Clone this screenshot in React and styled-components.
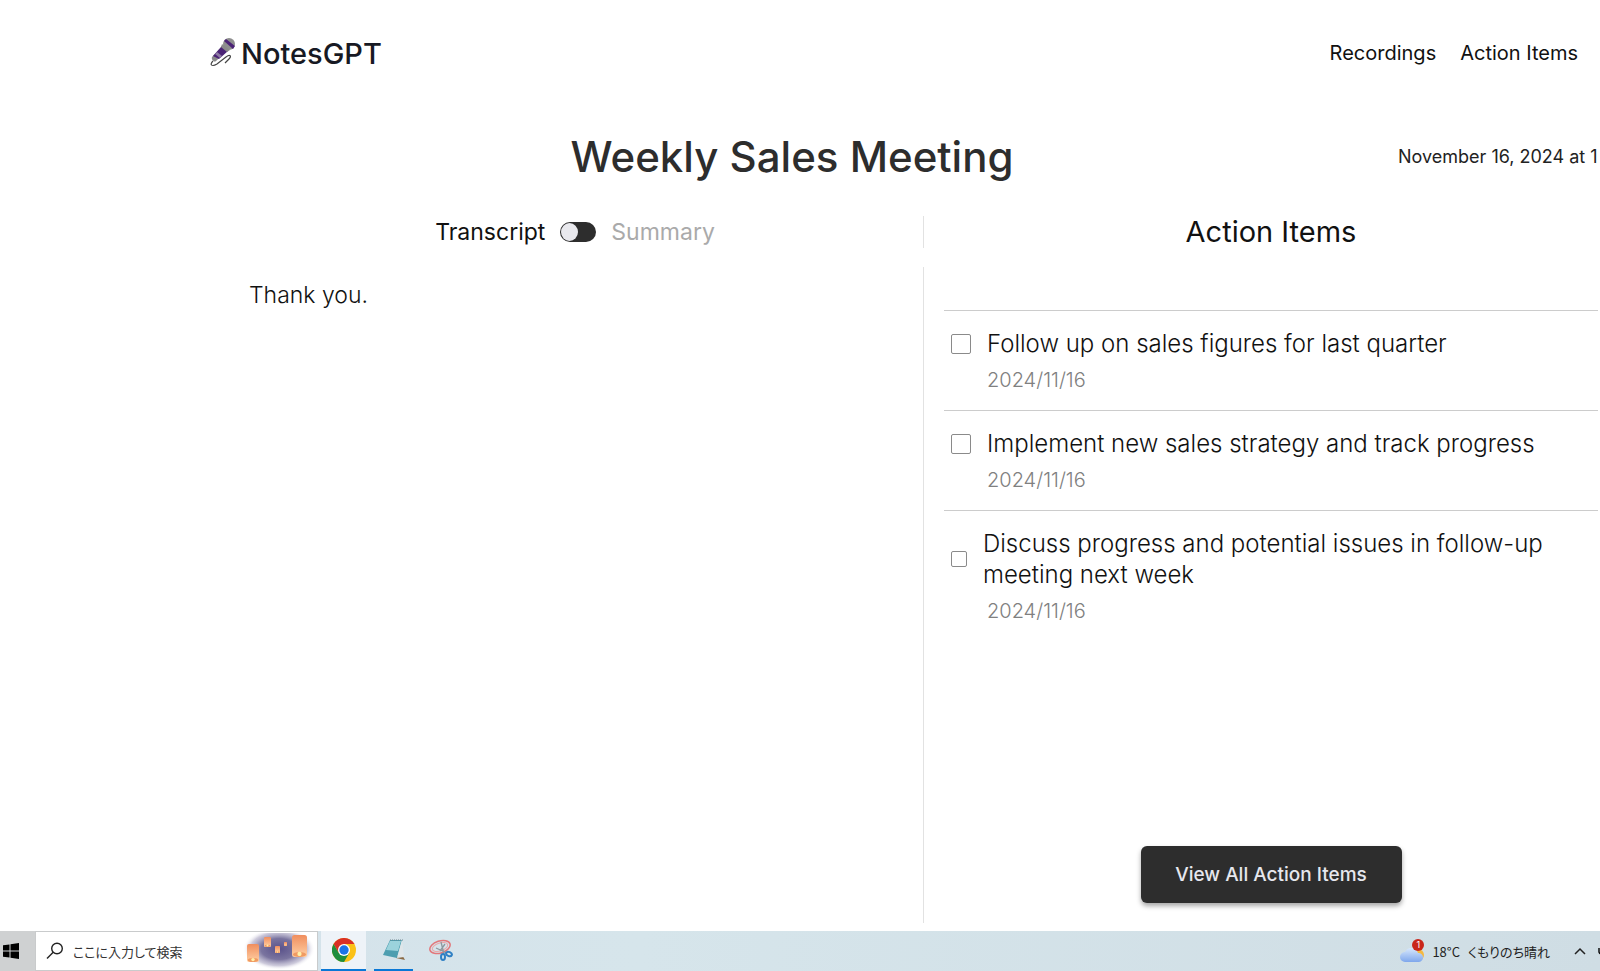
import React, { useState } from 'react';
import styled, { createGlobalStyle } from 'styled-components';

const items = [
  { id: 1, text: 'Follow up on sales figures for last quarter', date: '2024/11/16' },
  { id: 2, text: 'Implement new sales strategy and track progress', date: '2024/11/16' },
  { id: 3, text: 'Discuss progress and potential issues in follow-up meeting next week', date: '2024/11/16', wraps: true },
];

const MicLogo = () => (
  <svg width="26" height="30" viewBox="0 0 26 30" aria-hidden="true">
    <path d="M3 23C-1 27 2 29 7 26L16 19c4-3 6-1 3 2l-4 4" fill="none" stroke="#444" strokeWidth="1.2" />
    <path d="M2 19 13 7l5 5L6 23c-2 2-5-2-4-4z" fill="#8a8a8a" />
    <path d="m3 18 9-10 6 5-9 8z" fill="#4b2376" />
    <path d="m5 16 2-2 5 4-2 2z" fill="#8d7aa3" />
    <circle cx="19" cy="6" r="6" fill="#8e8e8e" />
    <path d="m14 3 2-2 9 7-2 3z" fill="#4b2376" />
    <path d="m12 6 8 6-3 2-6-5z" fill="#8a8a8a" />
  </svg>
);

const WindowsIcon = () => (
  <svg width="16" height="16" viewBox="0 0 16 16" aria-hidden="true">
    <path d="M0 2.3 6.5 1.4v6.1H0zM7.5 1.2 16 0v7.5H7.5zM0 8.5h6.5v6.1L0 13.7zM7.5 8.5H16V16l-8.5-1.2z" />
  </svg>
);

const SearchIcon = () => (
  <svg width="18" height="18" viewBox="0 0 18 18" fill="none" stroke="#222" strokeWidth="1.4" aria-hidden="true">
    <circle cx="11" cy="6.5" r="5.3" />
    <path d="M7.2 10.3 1 16.5" />
  </svg>
);

const Lantern = ({ x, y, w, h }) => (
  <g>
    <rect x={x} y={y} width={w} height={h} rx={w / 6} fill="url(#lantern)" />
    <ellipse cx={x + w / 2} cy={y + h - w / 6} rx={w / 2.3} ry={w / 6} fill="#f09a62" />
    <ellipse cx={x + w / 2} cy={y + h - w / 5} rx={w / 7} ry={w / 7} fill="#fff0a8" />
  </g>
);

const Lanterns = () => (
  <svg width="72" height="37" viewBox="0 0 72 37" aria-hidden="true">
    <defs>
      <radialGradient id="night">
        <stop offset="0" stopColor="#59518a" />
        <stop offset="0.5" stopColor="#7a749f" />
        <stop offset="0.8" stopColor="#b9b5cd" stopOpacity="0.7" />
        <stop offset="1" stopColor="#fff" stopOpacity="0" />
      </radialGradient>
      <linearGradient id="lantern" x1="0" y1="0" x2="0" y2="1">
        <stop offset="0" stopColor="#f08e5e" />
        <stop offset="1" stopColor="#ffd0a4" />
      </linearGradient>
    </defs>
    <ellipse cx="35" cy="16" rx="36" ry="21" fill="url(#night)" />
    <Lantern x={3} y={11} w={12} h={18} />
    <Lantern x={20} y={4} w={7} h={10} />
    <Lantern x={31} y={13} w={5} h={7} />
    <Lantern x={40} y={9} w={3} h={4} />
    <Lantern x={48} y={2} w={15} h={22} />
  </svg>
);

const ChromeIcon = () => (
  <svg width="24" height="24" viewBox="0 0 24 24" aria-hidden="true">
    <circle cx="12" cy="12" r="12" fill="#fbc116" />
    <path d="M1.6 6a12 12 0 0 1 20.8 0H12L6.8 15z" fill="#d93025" />
    <path d="M1.6 6A12 12 0 0 0 12 24l5.2-9H6.8z" fill="#1e8e3e" />
    <circle cx="12" cy="12" r="6" fill="#fff" />
    <circle cx="12" cy="12" r="4.7" fill="#1a73e8" />
  </svg>
);

const NotepadIcon = () => (
  <svg width="24" height="22" viewBox="0 0 24 22" aria-hidden="true">
    <path d="m19 14 4 7-9-2z" fill="#8a6a45" />
    <path d="M8 1h12l-5 18-14-3z" fill="#4d9eb0" />
    <path d="M8 2h11l-3 10-12-1z" fill="#9bd3dc" />
    <path d="m20 1 2 17-7 1z" fill="#dfe6e9" />
    <path d="M8 1h13" stroke="#70868e" strokeDasharray="1 1" />
  </svg>
);

const SnipIcon = () => (
  <svg width="24" height="22" viewBox="0 0 24 22" fill="none" aria-hidden="true">
    <ellipse cx="11" cy="8" rx="10.5" ry="6" stroke="#e2777b" strokeWidth="1.5" transform="rotate(-18 11 8)" />
    <ellipse cx="11" cy="8" rx="8" ry="4" stroke="#eaa8a9" transform="rotate(-18 11 8)" />
    <path d="m12 3 3 12M7 9l11 5M16 5l-5 7" stroke="#8d989e" strokeWidth="1.3" />
    <ellipse cx="14" cy="18" rx="2" ry="3" stroke="#2f80c4" strokeWidth="2" />
    <ellipse cx="20" cy="15" rx="3" ry="2" stroke="#2f80c4" strokeWidth="2" transform="rotate(25 20 15)" />
  </svg>
);

const CloudIcon = () => (
  <svg width="24" height="23" viewBox="0 0 24 23" aria-hidden="true">
    <defs>
      <linearGradient id="cloud" x1="0" y1="0" x2="0" y2="1">
        <stop offset="0" stopColor="#d8e8fc" />
        <stop offset="1" stopColor="#7fa7ec" />
      </linearGradient>
    </defs>
    <circle cx="18" cy="15" r="6" fill="#f5b93f" />
    <path d="M5 22a5 5 0 0 1 0-10 7 7 0 0 1 13 1 4.5 4.5 0 0 1 1 9z" fill="url(#cloud)" />
  </svg>
);

const ChevronIcon = () => (
  <svg width="12" height="8" viewBox="0 0 12 8" fill="none" stroke="#222" strokeWidth="1.5" aria-hidden="true">
    <path d="m1 7 5-5 5 5" />
  </svg>
);

// only the left edge of this tray icon is on screen
const EdgeIcon = () => (
  <svg width="2" height="8" viewBox="0 0 2 8" fill="none" stroke="#111" strokeWidth="1.5" aria-hidden="true">
    <path d="M1 1v4l1 2" />
  </svg>
);

const App = () => {
  const [showSummary, setShowSummary] = useState(false);
  const [done, setDone] = useState([]);

  const toggleDone = id =>
    setDone(done.includes(id) ? done.filter(d => d !== id) : [...done, id]);

  return (
    <Screen>
      <GlobalStyle />
      <Header>
        <Brand href="#">
          <MicLogo />
          NotesGPT
        </Brand>
        <Nav>
          <NavLink href="#recordings">Recordings</NavLink>
          <NavLink href="#actions">Action Items</NavLink>
        </Nav>
      </Header>
      <TitleRow>
        <Title>Weekly Sales Meeting</Title>
        <RecordedAt>November 16, 2024 at 1</RecordedAt>
      </TitleRow>
      <Columns>
        <Column>
          <Toolbar>
            <Mode $active={!showSummary}>Transcript</Mode>
            <Toggle
              type="button"
              role="switch"
              aria-checked={showSummary}
              aria-label="Show summary"
              onClick={() => setShowSummary(!showSummary)}
            >
              <Knob $on={showSummary} />
            </Toggle>
            <Mode $active={showSummary}>Summary</Mode>
          </Toolbar>
          <Transcript>Thank you.</Transcript>
        </Column>
        <Column>
          <Heading>Action Items</Heading>
          <Actions>
            <List>
              {items.map(item => (
                <Item key={item.id}>
                  <ItemLabel>
                    <Checkbox
                      type="checkbox"
                      $small={item.wraps}
                      checked={done.includes(item.id)}
                      onChange={() => toggleDone(item.id)}
                    />
                    <span>{item.text}</span>
                  </ItemLabel>
                  <ItemDate>{item.date}</ItemDate>
                </Item>
              ))}
            </List>
            <ViewAll type="button">View All Action Items</ViewAll>
          </Actions>
        </Column>
      </Columns>
      <Taskbar>
        <Start type="button" aria-label="Start">
          <WindowsIcon />
        </Start>
        <Search>
          <SearchIcon />
          <SearchInput type="text" aria-label="検索" placeholder="ここに入力して検索" />
          <Lanterns />
        </Search>
        <Task type="button" aria-label="Chrome" $running $focused>
          <ChromeIcon />
        </Task>
        <Task type="button" aria-label="Notepad" $running>
          <NotepadIcon />
        </Task>
        <Task type="button" aria-label="Snipping Tool">
          <SnipIcon />
        </Task>
        <Tray>
          <Weather>
            <CloudIcon />
            <Badge>1</Badge>
          </Weather>
          <span>18°C</span>
          <Forecast>くもりのち晴れ</Forecast>
          <ChevronIcon />
          <EdgeIcon />
        </Tray>
      </Taskbar>
    </Screen>
  );
};

export default App;

const GlobalStyle = createGlobalStyle`
  * {
    box-sizing: border-box;
  }

  body {
    margin: 0;
    background: #fff;
    color: #111;
    font-family: Inter, 'Noto Sans CJK JP', sans-serif;
  }

  button, input {
    font-family: inherit;
  }
`;

const Screen = styled.div`
  display: flex;
  flex-direction: column;
  min-height: 100vh;
  overflow: hidden;
`;

const Header = styled.header`
  display: flex;
  align-items: center;
  justify-content: space-between;
  height: 106px;
  padding: 0 22px 0 210px;
`;

const Brand = styled.a`
  display: flex;
  align-items: center;
  gap: 5px;
  color: #171923;
  font-size: 29px;
  font-weight: 500;
  text-decoration: none;
`;

const Nav = styled.nav`
  display: flex;
  gap: 24px;
`;

const NavLink = styled.a`
  color: #111;
  font-size: 20px;
  text-decoration: none;
`;

const TitleRow = styled.div`
  display: grid;
  grid-template-columns: 1fr auto 1fr;
  align-items: center;
  height: 100px;
  margin-right: 16px;
`;

const Title = styled.h1`
  grid-column: 2;
  margin: 0;
  color: #2d2d2d;
  font-size: 42px;
  font-weight: 500;
`;

const RecordedAt = styled.div`
  justify-self: end;
  width: 186px;
  color: #222;
  font-size: 18px;
  white-space: nowrap;
`;

const Columns = styled.main`
  display: grid;
  grid-template-columns: 714fr 675fr;
  flex: 1;
  padding: 10px 2px 8px 209px;
`;

const Column = styled.section`
  display: flex;
  flex-direction: column;
  gap: 19px;

  & + & > * {
    border-left: 1px solid #e2e2e2;
  }
`;

const Toolbar = styled.div`
  display: flex;
  align-items: center;
  justify-content: center;
  gap: 15px;
  height: 32px;
  padding-left: 18px;
`;

const Mode = styled.span`
  color: ${props => (props.$active ? '#111' : '#aaa')};
  font-size: 23px;
`;

const Toggle = styled.button`
  display: flex;
  width: 36px;
  height: 20px;
  padding: 1px;
  border: 0;
  border-radius: 10px;
  background: #2d2d2d;
`;

const Knob = styled.span`
  width: 17px;
  height: 18px;
  margin-left: ${props => (props.$on ? '17px' : '0')};
  border-radius: 50%;
  background: #e9e9ee;
`;

const Transcript = styled.p`
  margin: 0;
  padding: 12px 40px;
  font-size: 23px;
  font-weight: 300;
  line-height: 32px;
`;

const Heading = styled.h2`
  margin: 0;
  padding-left: 20px;
  font-size: 29px;
  font-weight: 400;
  line-height: 32px;
  text-align: center;
`;

const Actions = styled.div`
  display: flex;
  flex: 1;
  flex-direction: column;
  align-items: center;
  justify-content: space-between;
  padding: 43px 0 20px 20px;
`;

const List = styled.ul`
  width: 100%;
  margin: 0;
  padding: 0;
  list-style: none;
`;

const Item = styled.li`
  padding: 17px 40px 17px 7px;
  border-top: 1px solid #ccc;
`;

const ItemLabel = styled.label`
  display: flex;
  align-items: center;
  gap: 16px;
  font-size: 24px;
  font-weight: 300;
  line-height: 31px;
`;

const Checkbox = styled.input`
  appearance: none;
  flex: none;
  width: ${props => (props.$small ? '16px' : '20px')};
  height: ${props => (props.$small ? '16px' : '20px')};
  margin: 0;
  border: 1px solid #8a8a8a;
  border-radius: 2px;
  background: #fff;

  &:checked {
    background: #2d2d2d;
  }
`;

const ItemDate = styled.div`
  padding: 8px 0 0 36px;
  color: #808080;
  font-size: 20px;
  font-weight: 300;
  line-height: 26px;
`;

const ViewAll = styled.button`
  width: 261px;
  height: 57px;
  border: 0;
  border-radius: 6px;
  background: #2d2d2d;
  box-shadow: 0 3px 5px rgba(0, 0, 0, 0.35);
  color: #e6e7ee;
  font-size: 19px;
  font-weight: 500;
`;

const Taskbar = styled.footer`
  display: flex;
  height: 40px;
  background: linear-gradient(90deg, #d3e1ea, #d6e5eb 40%, #cfdde4);
  font-family: 'Noto Sans CJK JP', sans-serif;
`;

const Start = styled.button`
  display: flex;
  align-items: center;
  width: 35px;
  padding: 0 3px;
  border: 0;
  background: #cfd1d2;
`;

const Search = styled.div`
  display: flex;
  align-items: center;
  width: 283px;
  padding: 0 1px 0 10px;
  border: 1px solid #c9cbcc;
  background: #fff;
`;

const SearchInput = styled.input`
  flex: 1;
  min-width: 0;
  padding: 0 0 0 9px;
  border: 0;
  outline: 0;
  background: none;
  font-feature-settings: 'palt';
  font-size: 13px;

  &::placeholder {
    color: #333;
  }
`;

const Task = styled.button`
  display: flex;
  align-items: center;
  justify-content: center;
  width: ${props => (props.$focused ? '45px' : '39px')};
  margin-left: ${props => (props.$focused ? '3px' : '8px')};
  padding: 0;
  border: 0;
  border-bottom: 2px solid ${props => (props.$running ? '#0a78d6' : 'transparent')};
  background: ${props => (props.$focused ? '#eef3f8' : 'none')};
`;

const Tray = styled.div`
  display: flex;
  align-items: center;
  gap: 8px;
  margin-left: auto;
  color: #222;
  font-feature-settings: 'palt';
  font-size: 13px;

  & > :last-child {
    margin-left: 4px;
  }
`;

const Weather = styled.div`
  position: relative;
  display: flex;
`;

const Badge = styled.span`
  position: absolute;
  top: -1px;
  right: 0;
  width: 12px;
  height: 12px;
  border-radius: 50%;
  background: #c9261b;
  color: #fff;
  font-family: Inter, sans-serif;
  font-size: 9px;
  line-height: 12px;
  text-align: center;
`;

const Forecast = styled.span`
  margin-right: 16px;
`;
